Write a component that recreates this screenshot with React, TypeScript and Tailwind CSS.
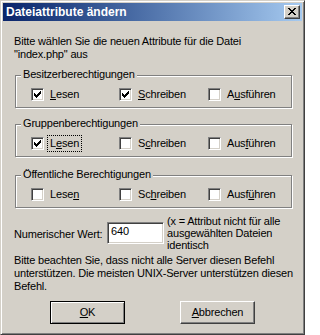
import React from "react";

const font = "font-['Liberation_Sans',Arial,sans-serif]";

function CheckMark() {
  return (
    <svg width="7" height="7" viewBox="0 0 7 7" shapeRendering="crispEdges" className="absolute left-[2px] top-[2px]">
      <rect x="6" y="0" width="1" height="1" fill="#000" />
      <rect x="5" y="1" width="2" height="1" fill="#000" />
      <rect x="0" y="2" width="1" height="1" fill="#000" />
      <rect x="4" y="2" width="3" height="1" fill="#000" />
      <rect x="0" y="3" width="2" height="1" fill="#000" />
      <rect x="3" y="3" width="3" height="1" fill="#000" />
      <rect x="0" y="4" width="5" height="1" fill="#000" />
      <rect x="1" y="5" width="3" height="1" fill="#000" />
      <rect x="2" y="6" width="1" height="1" fill="#000" />
    </svg>
  );
}

function Box({ checked }: { checked?: boolean }) {
  return (
    <span className="relative block w-[13px] h-[13px] shrink-0 bg-white border border-t-[#808080] border-l-[#808080] border-r-white border-b-white shadow-[inset_1px_1px_#404040,inset_-1px_-1px_#d4d0c8]">
      {checked && <CheckMark />}
    </span>
  );
}

function Opt({
  pre,
  key1,
  post,
  checked,
  focus,
  w,
}: {
  pre: string;
  key1: string;
  post: string;
  checked?: boolean;
  focus?: boolean;
  w: string;
}) {
  return (
    <div className={`flex items-center gap-[3px] h-[13px] ${w}`}>
      <Box checked={checked} />
      <span
        className={`leading-[13px] px-[2px] py-[1px] border ${
          focus ? "border-dotted border-black" : "border-transparent"
        }`}
      >
        {pre}
        <span className="underline underline-offset-[1px]">{key1}</span>
        {post}
      </span>
    </div>
  );
}

function Group({
  title,
  className,
  children,
}: {
  title: string;
  className?: string;
  children: React.ReactNode;
}) {
  return (
    <div
      className={`relative ml-[1px] w-[277px] h-[33px] border border-[#808080] shadow-[inset_1px_1px_#fff,1px_1px_#fff] ${className ?? ""}`}
    >
      <span className="absolute left-[5px] top-[-8px] px-[2px] bg-[#d4d0c8] leading-[13px]">
        {title}
      </span>
      <div className="flex pl-[15px] pt-[12px]">{children}</div>
    </div>
  );
}

export default function App() {
  return (
    <div
      className={`w-[305px] h-[335px] bg-[#d4d0c8] border border-t-[#d4d0c8] border-l-[#d4d0c8] border-r-[#404040] border-b-[#404040] shadow-[inset_1px_1px_#fff,inset_-1px_-1px_#808080] p-[2px] text-[11px] tracking-[-0.18px] text-black ${font} flex flex-col`}
    >
      <div className="h-[18px] flex items-center justify-between bg-gradient-to-r from-[#0a246a] to-[#a6caf0] pl-[3px] pr-[2px]">
        <span className="text-white font-bold text-[12px] tracking-[0px] leading-[18px]">
          Dateiattribute ändern
        </span>
        <div className="w-[16px] h-[14px] bg-[#d4d0c8] border border-t-white border-l-white border-r-[#404040] border-b-[#404040] shadow-[inset_-1px_-1px_#808080] flex items-center justify-center">
          <svg width="8" height="7" viewBox="0 0 8 7" shapeRendering="crispEdges" className="-mt-[1px] -ml-[1px]">
            <rect x="0" y="0" width="2" height="1" fill="#000" />
            <rect x="6" y="0" width="2" height="1" fill="#000" />
            <rect x="1" y="1" width="2" height="1" fill="#000" />
            <rect x="5" y="1" width="2" height="1" fill="#000" />
            <rect x="2" y="2" width="4" height="1" fill="#000" />
            <rect x="3" y="3" width="2" height="1" fill="#000" />
            <rect x="2" y="4" width="4" height="1" fill="#000" />
            <rect x="1" y="5" width="2" height="1" fill="#000" />
            <rect x="5" y="5" width="2" height="1" fill="#000" />
            <rect x="0" y="6" width="2" height="1" fill="#000" />
            <rect x="6" y="6" width="2" height="1" fill="#000" />
          </svg>
        </div>
      </div>

      <div className="flex flex-col pl-[11px]">
        <p className="mt-[14px] leading-[13px] whitespace-nowrap">
          Bitte wählen Sie die neuen Attribute für die Datei
          <br />
          "index.php" aus
        </p>

        <Group title="Besitzerberechtigungen" className="mt-[14px]">
          <Opt pre="" key1="L" post="esen" checked w="w-[88px]" />
          <Opt pre="" key1="S" post="chreiben" checked w="w-[89px]" />
          <Opt pre="A" key1="u" post="sführen" w="w-[80px]" />
        </Group>

        <Group title="Gruppenberechtigungen" className="mt-[16px]">
          <Opt pre="L" key1="e" post="sen" checked focus w="w-[88px]" />
          <Opt pre="S" key1="c" post="hreiben" w="w-[89px]" />
          <Opt pre="Aus" key1="f" post="ühren" w="w-[80px]" />
        </Group>

        <Group title="Öffentliche Berechtigungen" className="mt-[18px]">
          <Opt pre="Lese" key1="n" post="" w="w-[88px]" />
          <Opt pre="Sc" key1="h" post="reiben" w="w-[89px]" />
          <Opt pre="Ausf" key1="ü" post="hren" w="w-[80px]" />
        </Group>

        <div className="flex items-start mt-[6px]">
          <span className="mt-[14px] leading-[13px] w-[93px] whitespace-nowrap">Numerischer Wert:</span>
          <div className="mt-[8px] w-[57px] h-[22px] bg-white border border-t-[#808080] border-l-[#808080] border-r-white border-b-white shadow-[inset_1px_1px_#404040,inset_-1px_-1px_#d4d0c8] pl-[3px] pt-[2px] leading-[13px]">
            640
          </div>
          <p className="ml-[3px] mt-[1px] leading-[12px] whitespace-nowrap">
            (x = Attribut nicht für alle
            <br />
            ausgewählten Dateien
            <br />
            identisch
          </p>
        </div>

        <p className="mt-[3px] leading-[13px] whitespace-nowrap">
          Bitte beachten Sie, dass nicht alle Server diesen Befehl
          <br />
          unterstützen. Die meisten UNIX-Server unterstützen diesen
          <br />
          Befehl.
        </p>

        <div className="flex mt-[8px] pl-[36px] gap-[55px]">
          <button className="w-[75px] h-[23px] bg-[#d4d0c8] border border-black shadow-[inset_1px_1px_#fff,inset_-1px_-1px_#808080] leading-[13px]">
            <span className="underline underline-offset-[1px]">O</span>K
          </button>
          <button className="w-[75px] h-[23px] bg-[#d4d0c8] border border-t-white border-l-white border-r-[#404040] border-b-[#404040] shadow-[inset_-1px_-1px_#808080] leading-[13px]">
            <span className="underline underline-offset-[1px]">A</span>bbrechen
          </button>
        </div>
      </div>
    </div>
  );
}
